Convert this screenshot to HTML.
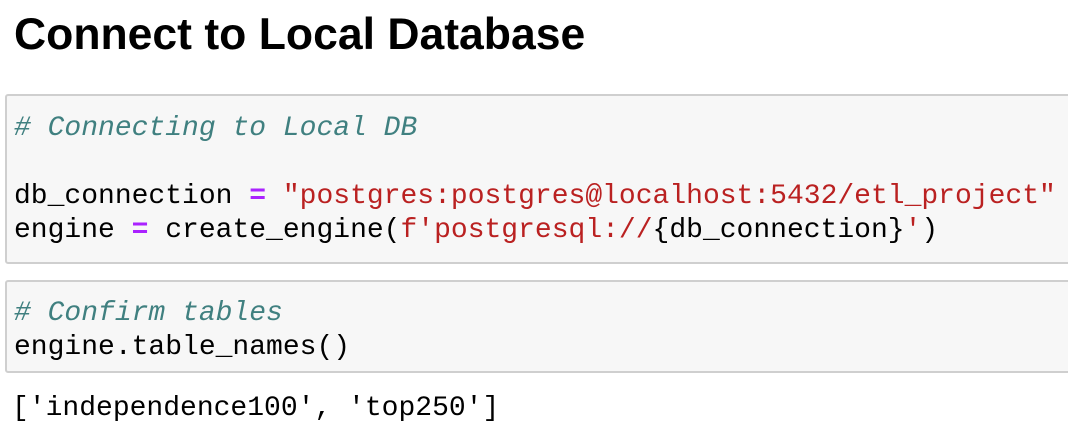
<html><head><style>
body{margin:0;background:#fff;width:1068px;height:434px;overflow:hidden;position:relative}
h1{position:absolute;left:14px;top:9px;margin:0;font:bold 44.5px "Liberation Sans",sans-serif;line-height:52px;color:#000}
.cell{position:absolute;left:5px;width:1080px;background:#f7f7f7;border:2px solid #cfcfcf;border-radius:3px;box-sizing:border-box}
pre{margin:0;font:28px "Liberation Mono",monospace;line-height:34px;color:#000;white-space:pre;position:absolute;left:7px}
.c{color:#408080;font-style:italic}.o{color:#aa22ff;font-weight:bold}.s{color:#ba2121}
</style></head><body>
<h1>Connect to Local Database</h1>
<div class="cell" style="top:94px;height:170px"><pre style="top:16px"><span class="c"># Connecting to Local DB</span>

db_connection <span class="o">=</span> <span class="s">"postgres:postgres@localhost:5432/etl_project"</span>
engine <span class="o">=</span> create_engine(<span class="s">f'postgresql://</span>{db_connection}<span class="s">'</span>)</pre></div>
<div class="cell" style="top:280px;height:93px"><pre style="top:15px"><span class="c"># Confirm tables</span>
engine.table_names()</pre></div>
<pre style="top:392px;left:12px">['independence100', 'top250']</pre>
</body></html>
